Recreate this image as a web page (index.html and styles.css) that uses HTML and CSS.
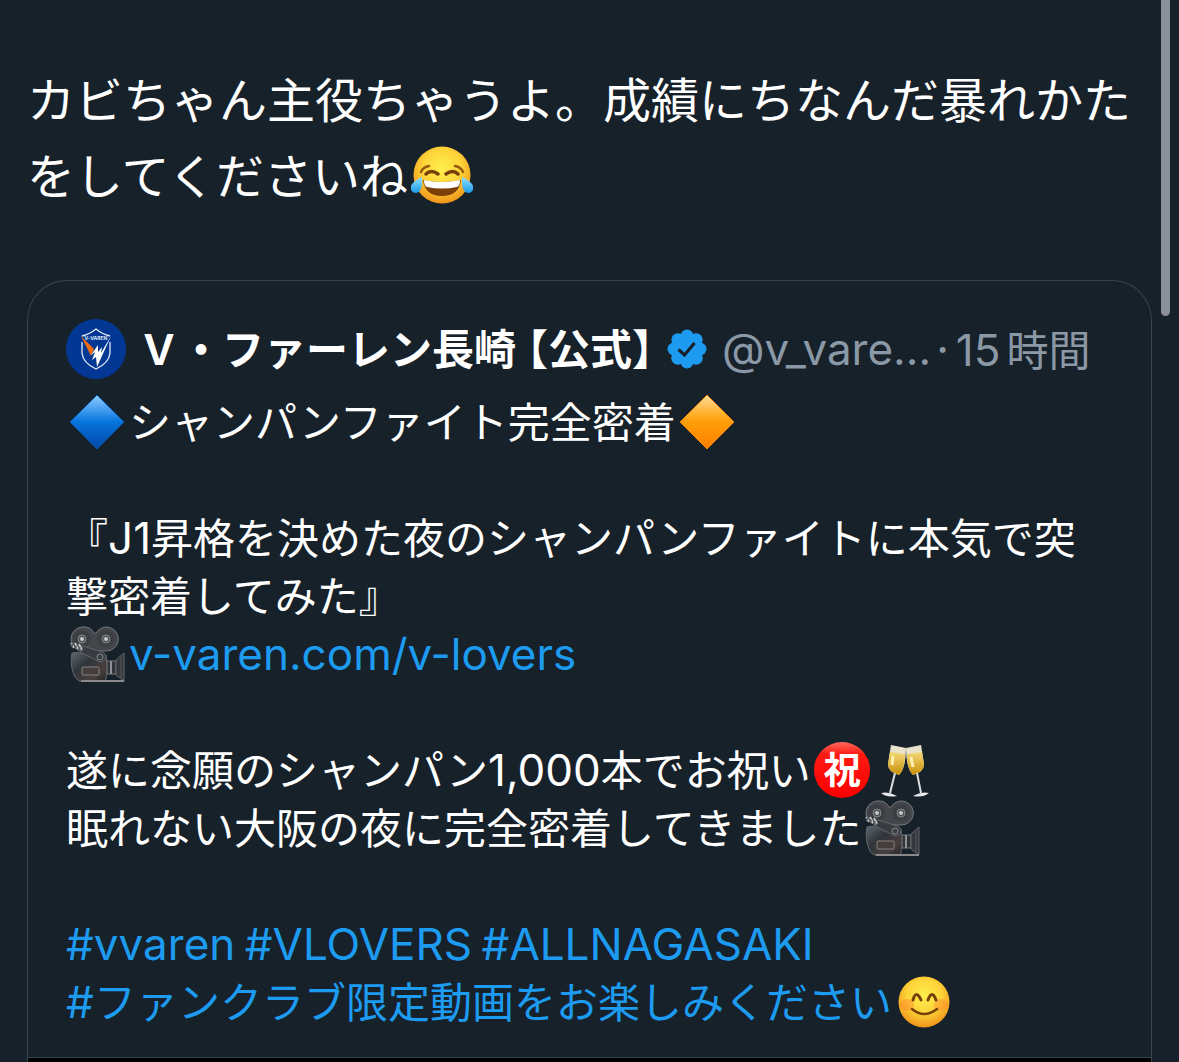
FILE: index.html
```html
<!DOCTYPE html>
<html lang="ja">
<head>
<meta charset="utf-8">
<meta name="viewport" content="width=device-width, initial-scale=1">
<title>V・ファーレン長崎</title>
<link rel="stylesheet" href="styles.css">
</head>
<body>
<svg class="defs" aria-hidden="true">
  <defs>
    <radialGradient id="face" cx="50%" cy="38%" r="62%">
      <stop offset="0" stop-color="#fff04e"/><stop offset=".55" stop-color="#fdd338"/><stop offset="1" stop-color="#ee941a"/>
    </radialGradient>
    <linearGradient id="tear" x1="0" y1="0" x2="0" y2="1">
      <stop offset="0" stop-color="#8fe0ff"/><stop offset="1" stop-color="#1c9ae8"/>
    </linearGradient>
    <linearGradient id="blue" x1="0" y1="0" x2="0" y2="1">
      <stop offset="0" stop-color="#8ccbff"/><stop offset=".3" stop-color="#3c98ec"/><stop offset=".5" stop-color="#0674dc"/><stop offset="1" stop-color="#0046a6"/>
    </linearGradient>
    <linearGradient id="orange" x1="0" y1="0" x2="0" y2="1">
      <stop offset="0" stop-color="#ffdc9a"/><stop offset=".3" stop-color="#ffb73a"/><stop offset=".5" stop-color="#ff9e06"/><stop offset="1" stop-color="#ff7e00"/>
    </linearGradient>
    <linearGradient id="red" x1="0" y1="0" x2="0" y2="1">
      <stop offset="0" stop-color="#ff6a5c"/><stop offset=".22" stop-color="#ff1a12"/><stop offset="1" stop-color="#fa0000"/>
    </linearGradient>
    <linearGradient id="body" x1="0" y1="0" x2="1" y2="1">
      <stop offset="0" stop-color="#5c6a70"/><stop offset=".4" stop-color="#30353a"/><stop offset=".75" stop-color="#493f3e"/><stop offset="1" stop-color="#202226"/>
    </linearGradient>
    <linearGradient id="wine" x1="0" y1="0" x2="0" y2="1">
      <stop offset="0" stop-color="#f5d97a"/><stop offset="1" stop-color="#c98f06"/>
    </linearGradient>
    <symbol id="camera" viewBox="0 0 56 56">
      <path d="M13 1a12 12 0 0 1 12 6q1 1 2 0A12 12 0 1 1 37 25H15A12 12 0 0 1 13 1Z" fill="#43474b" stroke="#73777a" stroke-width="1"/>
      <circle cx="13" cy="13" r="8.500" fill="#3b3f43"/><circle cx="37" cy="13" r="8.500" fill="#3b3f43"/>
      <circle cx="13" cy="13" r="4" fill="#4c5155" stroke="#85898c"/><circle cx="37" cy="13" r="4" fill="#4c5155" stroke="#85898c"/>
      <circle cx="13" cy="13" r="2" fill="#c8cacc"/><circle cx="37" cy="13" r="2" fill="#c8cacc"/>
      <path d="M38 35h9v13h-9z" fill="#303439" stroke="#777b7f"/><path d="M42 35v13" stroke="#8d9194" stroke-width="2"/>
      <path d="M47 34 55 27V55L47 49Z" fill="#34373b" stroke="#63676b"/><path d="M52 31v21" stroke="#55595d"/>
      <path d="M3 27q15-3 34 2q2 12 0 24l-2 2H10Q5 52 4 46Q1 38 3 27Z" fill="url(#body)" stroke="#62676b"/>
      <path d="M12 55h43" stroke="#8a8a8c" stroke-width="2"/>
      <rect x="13" y="41" width="17" height="8" rx="1" fill="#453e3c" stroke="#85817f" stroke-width="1"/>
      <path d="M14 20 33 26A5 5 0 1 1 29 35L11 26Z" fill="#383b3f" stroke="#62666a"/>
      <circle cx="31" cy="31" r="3" fill="#3a3e42" stroke="#85898c"/>
      <path d="M2 17 5 22M6 17 9 23M10 18 13 24" stroke="#c2c4c6" stroke-width="2"/>
      <path d="M2 19 14 24" stroke="#55595d" stroke-width="3" stroke-dasharray="2 2"/>
    </symbol>
  </defs>
</svg>

<main class="post">
  <p class="post-text">カビちゃん主役ちゃうよ。成績にちなんだ暴れかた<br>をしてくださいね<svg class="emoji-large" viewBox="0 0 64 60" role="img" aria-label="うれし泣きの顔"><circle cx="32" cy="29" r="28.500" fill="url(#face)"/><path d="M11 26Q13 21 19 20M45 20Q51 21 53 26" fill="none" stroke="#9a5a12" stroke-width="2.500" stroke-linecap="round"/><path d="M16 28Q21 23 28 28M36 28Q43 23 48 28" fill="none" stroke="#764008" stroke-width="3.500" stroke-linecap="round"/><path d="M13 34Q32 38 51 34Q49 50 32 50T13 34Z" fill="#7b400a"/><path d="M14 34Q32 38 50 34Q50 40 47 41Q32 44 17 41Q14 40 14 34Z" fill="#fff"/><path d="M12 31Q13 46 6 47Q0 47 1 40Q3 35 12 31ZM52 31Q51 46 58 47Q64 47 63 40Q61 35 52 31Z" fill="url(#tear)"/></svg></p>

  <article class="quote">
    <div class="quote-content">
      <header class="author">
        <svg class="avatar" viewBox="0 0 60 60" role="img" aria-label="V-VAREN NAGASAKI">
          <circle cx="30" cy="30" r="30" fill="#023894"/>
          <path d="M16 17Q24 15 30 10Q36 15 44 17M16 23V34Q17 44 30 50Q43 44 44 34V23" fill="none" stroke="#e4ecf7" stroke-width="1.300"/>
          <text class="crest" x="30" y="21" text-anchor="middle">V-VAREN</text>
          <path d="M15 17 28 30 25 37Z" fill="#f26a10"/>
          <path d="M45 17 31 48 30 38 26 41 29 33 25 36 32 26 32 33 36 28 35 34Z" fill="#fff"/>
        </svg>
        <strong class="name">Ｖ・ファーレン長崎<span class="bracket open">【</span>公式<span class="bracket">】</span></strong>
        <svg class="badge" viewBox="0 0 40 40" role="img" aria-label="認証済みアカウント"><g fill="#1d9bf0"><circle cx="20" cy="20" r="16"/><circle cx="20" cy="7" r="6.500"/><circle cx="29.200" cy="10.800" r="6.500"/><circle cx="33" cy="20" r="6.500"/><circle cx="29.200" cy="29.200" r="6.500"/><circle cx="20" cy="33" r="6.500"/><circle cx="10.800" cy="29.200" r="6.500"/><circle cx="7" cy="20" r="6.500"/><circle cx="10.800" cy="10.800" r="6.500"/></g><path d="M11.500 20.500 17.500 26 27.500 14" fill="none" stroke="#17212a" stroke-width="3.200"/></svg>
        <span class="handle">@v_vare...</span>
        <span class="dot">·</span>
        <time class="time">15<span class="unit">時間</span></time>
      </header>
      <p class="quote-text"><svg class="emoji" viewBox="0 0 56 56" role="img" aria-label="青いひし形"><path d="M28 1 55 28 28 55 1 28Z" fill="url(#blue)" stroke="#0757b0"/></svg>シャンパンファイト完全密着<svg class="emoji" viewBox="0 0 56 56" role="img" aria-label="オレンジのひし形"><path d="M28 1 55 28 28 55 1 28Z" fill="url(#orange)" stroke="#ee8109"/></svg><br>
<br>
『<span class="latin">J1</span>昇格を決めた夜のシャンパンファイトに本気で突<br>撃密着してみた』<br>
<svg class="emoji" role="img" aria-label="映画カメラ"><use href="#camera"/></svg><a class="latin" href="#lovers">v-varen.com/v-lovers</a><br>
<br>
遂に念願のシャンパン<span class="latin">1,000</span>本でお祝い<svg class="emoji" viewBox="0 0 56 56" role="img" aria-label="祝"><circle cx="28" cy="28" r="28" fill="url(#red)"/><text class="seal" x="28" y="42" text-anchor="middle">祝</text></svg><svg class="emoji" viewBox="0 0 56 56" role="img" aria-label="乾杯"><path d="M14 3 29 6Q29 26 22 33Q11 30 11 22Z" fill="#e9e3cb"/><path d="M13 10 28 12Q28 27 22 33Q11 30 11 22Z" fill="url(#wine)"/><path d="M16 14 15 23" stroke="#fff0ad" stroke-width="3"/><path d="M18 31 13 51" stroke="#dadddf" stroke-width="2"/><path d="M4 51Q12 49 20 54Q10 56 4 51Z" fill="#e8eaec"/><path d="M44 3 29 6Q29 26 36 33Q47 30 47 22Z" fill="#e9e3cb"/><path d="M45 10 30 12Q30 27 36 33Q47 30 47 22Z" fill="url(#wine)"/><path d="M34 15 36 25" stroke="#fff0ad" stroke-width="3"/><path d="M40 31 44 51" stroke="#dadddf" stroke-width="2"/><path d="M52 51Q44 49 36 54Q46 56 52 51Z" fill="#e8eaec"/></svg><br>
眠れない大阪の夜に完全密着してきました<svg class="emoji" role="img" aria-label="映画カメラ"><use href="#camera"/></svg><br>
<br>
<a class="latin" href="#vvaren">#vvaren</a> <a class="latin" href="#vlovers">#VLOVERS</a> <a class="latin" href="#nagasaki">#ALLNAGASAKI</a><br>
<a href="#fanclub"><span class="latin">#</span>ファンクラブ限定動画をお楽しみください</a><svg class="emoji" viewBox="0 0 56 56" role="img" aria-label="笑顔"><circle cx="29" cy="28" r="25.500" fill="url(#face)"/><ellipse cx="12" cy="31" rx="7" ry="6" fill="#ff802f" opacity=".4"/><ellipse cx="46" cy="31" rx="7" ry="6" fill="#ff802f" opacity=".4"/><path d="M18 26Q21 15 26 26M33 26Q37 15 41 26" fill="none" stroke="#754009" stroke-width="3" stroke-linecap="round"/><path d="M17 35Q29 45 42 35" fill="none" stroke="#754009" stroke-width="2.500" stroke-linecap="round"/></svg></p>
    </div>
    <div class="media"></div>
  </article>
</main>
<div class="scroll-thumb"></div>
</body>
</html>
```
FILE: styles.css
```css
* {
  box-sizing: border-box;
}

html {
  overflow: hidden;
}

body {
  margin: 0;
  background: #17212a;
  color: #fff;
  font-family: "Noto Sans CJK JP", sans-serif;
}

.defs {
  position: absolute;
  width: 0;
  height: 0;
}

.post {
  display: flex;
  flex-direction: column;
  min-height: 100vh;
  padding: 59px 27px 0;
}

.post-text {
  margin: 0 0 69px;
  font-size: 48px;
  line-height: 76px;
  white-space: nowrap;
}

.quote {
  display: flex;
  flex-direction: column;
  flex: 1;
  border: 1px solid #38444d;
  border-bottom: 0;
  border-radius: 40px 40px 0 0;
}

.quote-content {
  padding: 38px 38px 28px;
}

.author {
  display: flex;
  align-items: center;
  height: 60px;
  margin-bottom: 12px;
  font-size: 42px;
  line-height: 60px;
  white-space: nowrap;
}

.avatar {
  flex: none;
  width: 60px;
  height: 60px;
  margin-right: 12px;
}

.crest {
  fill: #dfe8f5;
  font: 700 5px "Inter", sans-serif;
}

.name {
  padding-bottom: 4px;
  font-weight: 700;
}

.bracket {
  font-feature-settings: "halt";
}

.open {
  margin-left: 11px;
}

.badge {
  flex: none;
  width: 40px;
  height: 40px;
  margin: 0 15px 0 14px;
}

.handle,
.dot,
.time {
  color: #8b98a5;
  font-family: "Inter", sans-serif;
  font-size: 44px;
}

.dot {
  margin: 0 7px 0 5px;
}

.unit {
  margin-left: 6px;
  font-family: "Noto Sans CJK JP", sans-serif;
  font-size: 42px;
}

.quote-text {
  margin: 0;
  font-size: 42px;
  line-height: 58px;
  white-space: nowrap;
}

.latin {
  font-family: "Inter", sans-serif;
  font-size: 44px;
  line-height: 1;
}

a {
  color: #1d9bf0;
  text-decoration: none;
}

.emoji {
  width: 56px;
  height: 56px;
  margin: -4px 4px -4px 3px;
  vertical-align: -8px;
}

.emoji-large {
  width: 64px;
  height: 60px;
  margin-left: 2px;
  vertical-align: -12px;
}

.seal {
  fill: #fff;
  font: 700 37px "Noto Sans CJK JP", sans-serif;
}

.media {
  flex: 1;
  min-height: 4px;
  border-top: 1px solid #38444d;
  background: #000;
}

.scroll-thumb {
  position: absolute;
  top: 0;
  right: 9px;
  width: 9px;
  height: 316px;
  border-radius: 0 0 5px 5px;
  background: #8b8f98;
}
```
